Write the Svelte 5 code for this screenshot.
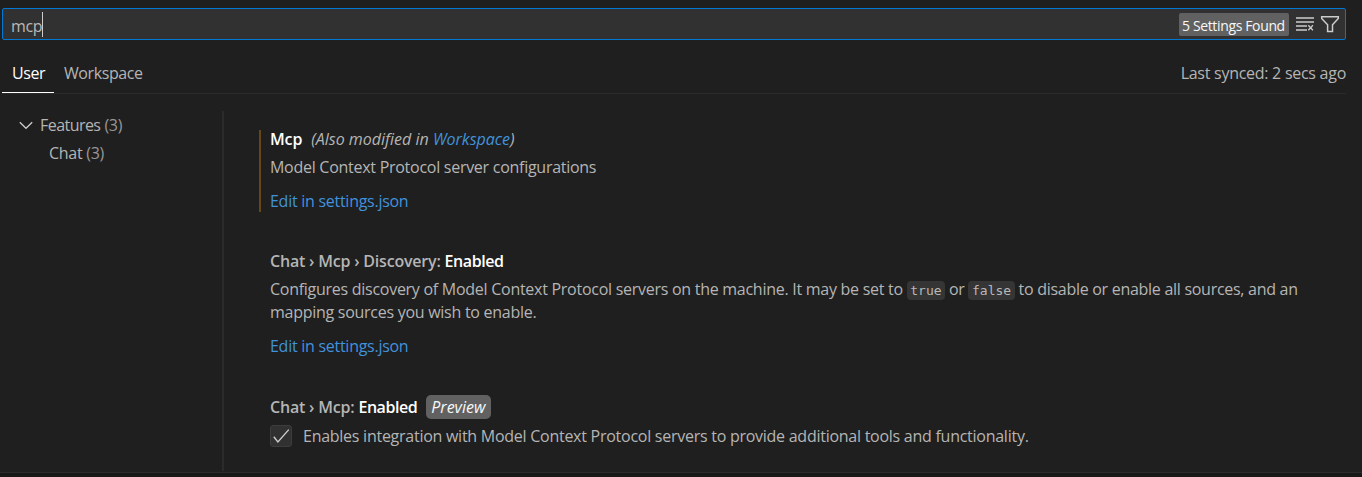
<script>
  const toc = [
    { label: 'Features', count: 3, level: 0 },
    { label: 'Chat', count: 3, level: 1 }
  ];
</script>

<div class="editor">
  <header class="search">
    <span class="query">mcp</span><i class="caret"></i>
    <span class="found"><span>5 Settings Found</span></span>
    <svg class="clear" width="20" height="20" viewBox="0 0 20 20" fill="none" stroke="#cccccc" stroke-width="1.3">
      <path d="M1 4h18M1 8h18M1 12h11M1 16h11M13.3 11.3l4.6 5M17.9 11.3l-4.6 5" />
    </svg>
    <svg class="filter" width="20" height="20" viewBox="0 0 20 20" fill="none" stroke="#cccccc" stroke-width="1.5">
      <path d="M1.7 2.8h16.6v1.7l-5.8 6.2v6.8h-4.9v-6.8L1.7 4.5z" />
    </svg>
  </header>

  <nav class="tabs">
    <span class="tab active">User</span>
    <span class="tab">Workspace</span>
    <span class="sync">Last synced: 2 secs ago</span>
  </nav>

  <main>
    <aside>
      {#each toc as row}
        <div class="row" class:child={row.level === 1}>
          {#if row.level === 0}
            <svg width="20" height="20" viewBox="0 0 20 20" fill="none" stroke="#cccccc" stroke-width="1.3"><path d="M3.8 7.2l6.2 6.1L16.2 7.2" /></svg>
          {/if}
          <span class="name">{row.label}</span><span class="count">({row.count})</span>
        </div>
      {/each}
    </aside>

    <section>
      <article class="modified">
        <h3><b class="mcp">Mcp</b><em class="also">(Also modified in <a>Workspace</a>)</em></h3>
        <p>Model Context Protocol server configurations</p>
        <a class="edit">Edit in settings.json</a>
      </article>

      <article>
        <h3><span class="cat">Chat › Mcp › Discovery:</span><b class="en">Enabled</b></h3>
        <p>Configures discovery of Model Context Protocol servers on the machine. It may be set to <code>true</code> or <code>false</code> <span class="tail">to disable or enable all sources, and an</span><br />mapping sources you wish to enable.</p>
        <a class="edit">Edit in settings.json</a>
      </article>

      <article class="last">
        <h3><span class="cat">Chat › Mcp:</span><b class="en">Enabled</b><em class="preview">Preview</em></h3>
        <div class="option">
          <span class="box">
            <svg width="20" height="20" viewBox="0 0 20 20" fill="none" stroke="#cccccc" stroke-width="1.4"><path d="M2.8 10.8l4.1 5.2L17.8 3.6" /></svg>
          </span>
          <span class="d3">Enables integration with Model Context Protocol servers to provide additional tools and functionality.</span>
        </div>
      </article>
    </section>
  </main>
  <footer></footer>
</div>

<style>
  :global(body) {
    margin: 0;
    background: #1f1f1f;
  }
  .editor {
    box-sizing: border-box;
    width: 1362px;
    height: 477px;
    padding-top: 8px;
    display: flex;
    flex-direction: column;
    overflow: hidden;
    background: #1f1f1f;
    color: #b5b5b5;
    font: 16px/20px 'Open Sans', 'Noto Sans', sans-serif;
    letter-spacing: -0.27px;
    white-space: nowrap;
  }
  .search {
    box-sizing: border-box;
    height: 32px;
    margin: 0 16px 0 2px;
    padding: 0 5px 0 8px;
    display: flex;
    align-items: center;
    background: #313131;
    border: 1px solid #0078d4;
    border-radius: 2px;
  }
  .query {
    padding-top: 3px;
    letter-spacing: -0.35px;
    color: #b8b8b8;
  }
  .caret {
    width: 1px;
    height: 25px;
    background: #cccccc;
  }
  .found {
    box-sizing: border-box;
    width: 110px;
    height: 23px;
    margin-left: auto;
    padding: 3px 0 0 3px;
    border-radius: 2px;
    background: #616161;
    color: #f8f8f8;
    font-size: 14px;
    letter-spacing: -0.36px;
  }
  .clear { margin-left: 6px; }
  .filter { margin-left: 5px; }
  .tabs {
    height: 53px;
    margin: 0 16px 0 2px;
    display: flex;
    border-bottom: 1px solid #2b2b2b;
  }
  .tab {
    box-sizing: border-box;
    height: 53px;
    padding: 23px 0 0 10px;
    letter-spacing: -0.4px;
  }
  .tab.active {
    width: 52px;
    color: #ffffff;
    border-bottom: 1px solid #ffffff;
  }
  .sync {
    margin: 23px 0 0 auto;
  }
  main {
    flex: 1;
    display: flex;
    min-height: 0;
  }
  aside {
    box-sizing: border-box;
    width: 224px;
    height: 360px;
    margin-top: 17px;
    padding-left: 16px;
    border-right: 2px solid #2b2b2b;
  }
  .row {
    display: flex;
    align-items: center;
    height: 28px;
  }
  .row svg { margin-right: 4px; }
  .row.child { padding-left: 33px; }
  .name { letter-spacing: -0.55px; }
  .child .name { letter-spacing: -0.3px; }
  .count {
    margin-left: 4px;
    color: #979797;
  }
  section {
    flex: 1;
    padding: 36px 0 0 35px;
  }
  article {
    padding-left: 9px;
    margin-bottom: 40px;
    border-left: 2px solid transparent;
  }
  article.modified { border-color: #664719; }
  h3 {
    margin: -1px 0 7px;
    height: 20px;
    display: flex;
    align-items: center;
    font: inherit;
    font-weight: 600;
  }
  article.modified h3 { margin: 0 0 6px; }
  article.modified h3 > * { margin-top: -3px; }
  b {
    color: #ffffff;
    font-weight: 600;
  }
  em { font-weight: 400; }
  .mcp { letter-spacing: -0.15px; }
  .also {
    margin-left: 9px;
    letter-spacing: 0;
  }
  a { color: #4192dc; }
  .cat { letter-spacing: -0.2px; }
  .en {
    margin-left: 4px;
    letter-spacing: -0.45px;
  }
  p {
    margin: 0 0 12px;
    line-height: 23px;
  }
  .edit {
    display: block;
    padding-bottom: 1px;
  }
  code {
    font: 13px/18px 'DejaVu Sans Mono', monospace;
    letter-spacing: 0;
    padding: 2px 3.5px;
    border-radius: 4px;
    background: #353535;
    color: #b8b8b8;
  }
  .tail { letter-spacing: -0.28px; }
  .preview {
    box-sizing: border-box;
    width: 65px;
    height: 24px;
    margin-left: 9px;
    padding: 2px 0 0 5px;
    border-radius: 5px;
    background: #616161;
    color: #f8f8f8;
    letter-spacing: 0;
  }
  .last { margin: 41px 0 0; }
  .option {
    display: flex;
    align-items: center;
    height: 23px;
  }
  .box {
    width: 20px;
    height: 20px;
    margin: 1px 11px 0 0;
    background: #313131;
    border: 1px solid #3c3c3c;
    border-radius: 3px;
  }
  .box svg { display: block; }
  .d3 { letter-spacing: -0.26px; }
  footer {
    height: 4px;
    border-top: 1px solid #2b2b2b;
    background: #181818;
  }
</style>
